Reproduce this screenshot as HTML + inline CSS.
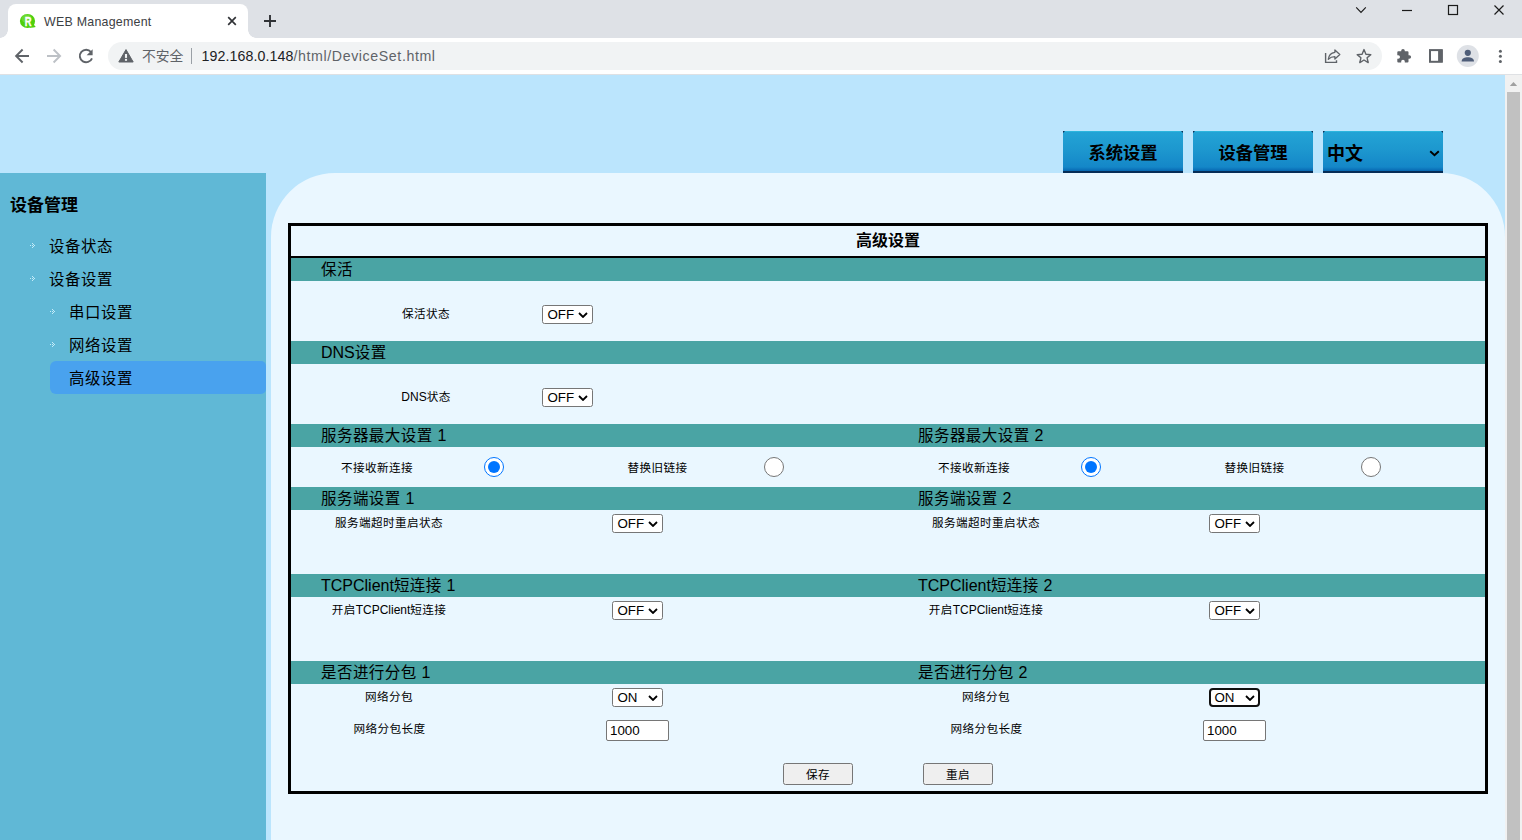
<!DOCTYPE html>
<html lang="zh-CN">
<head>
<meta charset="utf-8">
<title>WEB Management</title>
<style>
*{box-sizing:border-box;margin:0;padding:0}
html,body{width:1522px;height:840px;overflow:hidden;background:#bbe5fd;font-family:"Liberation Sans","Noto Sans CJK SC",sans-serif;color:#000}
.abs{position:absolute}
#root{position:relative;width:1522px;height:840px;overflow:hidden}
/* ---------- browser chrome ---------- */
#tabbar{left:0;top:0;width:1522px;height:38px;background:#dee1e6}
#tab{left:8px;top:4px;width:240px;height:34px;background:#fff;border-radius:8px 8px 0 0}
#tab:before,#tab:after{content:"";position:absolute;bottom:0;width:8px;height:8px;background:radial-gradient(circle at 0 0,transparent 7.5px,#fff 8px)}
#tab:before{left:-8px}
#tab:after{right:-8px;background:radial-gradient(circle at 100% 0,transparent 7.5px,#fff 8px)}
#tabtitle{left:44px;top:14px;letter-spacing:.25px;font-size:12.4px;line-height:16px;color:#3c4043;white-space:nowrap}
#toolbar{left:0;top:38px;width:1522px;height:36px;background:#fff}
#toolline{left:0;top:74px;width:1522px;height:1px;background:#dfe1e4}
#omni{left:108px;top:42px;width:1274px;height:28px;border-radius:14px;background:#f1f3f4}
#insecure{left:142px;top:48px;font-size:13.8px;line-height:18px;color:#5f6368;white-space:nowrap}
#omnisep{left:191px;top:48px;width:1px;height:16px;background:#9aa0a6}
#url{left:201.5px;top:47px;letter-spacing:.1px;font-size:14.2px;line-height:18px;color:#202124;white-space:nowrap}
#url span{color:#5f6368;letter-spacing:.6px}
/* ---------- page ---------- */
#page{left:0;top:74px;width:1505px;height:766px;background:#bbe5fd;overflow:hidden}
#scroll{left:1505px;top:74px;width:17px;height:766px;background:#f1f1f1}
#thumb{left:1507px;top:92px;width:13px;height:748px;background:#c1c1c1}
#side{left:0;top:99px;width:266px;height:667px;background:#60b8d6}
#panel{left:271px;top:99px;width:1234px;height:700px;background:#eaf7ff;border-radius:64px 64px 0 0}
.nav{top:57px;width:120px;height:42px;text-align:center;font-size:17.3px;line-height:44.6px;font-weight:bold;
 background:linear-gradient(#2cb5dd 0,#2cb5dd 1px,#23a3d5 1px,#1d98cf 18px,#1487c8 36px,#0767b1 40px,#062d57 40px,#062d57 42px)}
.nav:before,.nav:after{content:"";position:absolute;top:0;width:0;height:0;border-top:2px solid #0a2f57}
.nav:before{left:0;border-right:2px solid transparent}
.nav:after{right:0;border-left:2px solid transparent}
.sh{margin-top:1px;font-size:17px;font-weight:bold;left:10px;line-height:22px}
.mi{margin-top:1.3px;font-size:15.4px;letter-spacing:.6px;line-height:22px;white-space:nowrap}
.dot{width:5px;height:5px}
#sel{left:50px;top:287px;width:216px;height:33px;border-radius:6px 5px 5px 6px;background:#49a2ee}
/* table */
#tbl{left:288px;top:149px;width:1200px;height:571px;border:3px solid #000}
#thead{left:291px;top:152px;width:1194px;height:32px;border-bottom:2px solid #000;text-align:center;font-weight:bold;font-size:16px;line-height:29px}
.band{left:291px;width:1194px;height:23px;background:#4aa4a4;font-size:15.5px;letter-spacing:.45px;line-height:22px}
.band span{position:absolute;top:1px;white-space:nowrap}
.band i{font-style:normal;font-size:16px;letter-spacing:0;position:relative;top:-.5px}
.lb i{font-style:normal;font-size:12px;letter-spacing:0}
.lb{margin-top:1px;font-size:11.6px;letter-spacing:.4px;line-height:16px;white-space:nowrap;text-align:center;width:160px}
.sl{width:51px;height:19px;border:1px solid #767676;border-radius:2.5px;background:#fff;font-size:13.33px;line-height:17px;padding-left:4.5px}
.sl svg{position:absolute;right:4px;top:5.5px}
.sl.fc svg{right:3px;top:4.5px}
.rd{width:20px;height:20px;border-radius:50%;border:1px solid #767676;background:#fff}
.rd.on{border:1.5px solid #0075ff}
.rd.on:after{content:"";position:absolute;left:2.5px;top:2.5px;width:12px;height:12px;border-radius:50%;background:#0075ff}
.tx{width:63px;height:21px;border:1px solid #767676;border-radius:2px;background:#fff;font-size:13.33px;line-height:19px;padding-left:3px}
.bt{width:70px;height:22px;border:1px solid #767676;border-radius:2.5px;background:#efefef;font-size:11.6px;letter-spacing:.4px;line-height:22px;text-align:center}
</style>
</head>
<body>
<div id="root">
<!-- chrome -->
<div id="tabbar" class="abs"></div>
<div id="tab" class="abs"></div>
<div id="toolbar" class="abs"></div>
<div id="omni" class="abs"></div>
<div id="tabtitle" class="abs">WEB Management</div>
<div id="insecure" class="abs">不安全</div>
<div id="omnisep" class="abs"></div>
<div id="url" class="abs">192.168.0.148<span>/html/DeviceSet.html</span></div>
<svg id="icons" class="abs" style="left:0;top:0" width="1522" height="74" viewBox="0 0 1522 74">
 <!-- favicon -->
 <ellipse cx="27.5" cy="21" rx="7.6" ry="7.1" fill="#4fd00c"/>
 <path d="M29.5 27.6 Q33 27.8 35.8 26.9 Q33.6 25.6 33.6 23 Z" fill="#4fd00c"/>
 <ellipse cx="26.5" cy="18.5" rx="5" ry="4.2" fill="#86e352" opacity=".5"/>
 <text x="28.1" y="25.5" font-family="Liberation Sans, sans-serif" font-size="12.6" font-weight="bold" fill="#fff" stroke="#fff" stroke-width=".35" text-anchor="middle" textLength="6.8" lengthAdjust="spacingAndGlyphs">R</text>
 <!-- tab close / new tab -->
 <path d="M228.2 17.2 L235.8 24.8 M235.8 17.2 L228.2 24.8" stroke="#303236" stroke-width="1.65" fill="none"/>
 <path d="M264 21 H276 M270 15 V27" stroke="#303236" stroke-width="1.9" fill="none"/>
 <!-- window controls -->
 <path d="M1356.2 7.3 L1361 12.3 L1365.8 7.3" stroke="#1b1b1b" stroke-width="1.15" fill="none"/>
 <path d="M1402 10.5 H1412" stroke="#1b1b1b" stroke-width="1.2" fill="none"/>
 <rect x="1448.5" y="5.5" width="9" height="9" stroke="#1b1b1b" stroke-width="1.2" fill="none"/>
 <path d="M1494.5 5.5 L1503.5 14.5 M1503.5 5.5 L1494.5 14.5" stroke="#1b1b1b" stroke-width="1.2" fill="none"/>
 <!-- back / forward / reload -->
 <path d="M29 56 H16.4 M22.6 49.5 L16.1 56 L22.6 62.5" stroke="#5f6368" stroke-width="1.9" fill="none"/>
 <path d="M47 56 H59.8 M53.6 49.5 L60.1 56 L53.6 62.5" stroke="#bdc1c6" stroke-width="1.9" fill="none"/>
 <path d="M91 52 A6.3 6.3 0 1 0 92 58.3" stroke="#5f6368" stroke-width="1.9" fill="none"/>
 <path d="M92.6 49.2 V55.2 H86.6 Z" fill="#5f6368"/>
 <!-- warning -->
 <path d="M126 49.6 L133.2 62 H118.8 Z" fill="#5f6368" stroke="#5f6368" stroke-width="1" stroke-linejoin="round"/>
 <rect x="124.95" y="54" width="2.1" height="3.9" fill="#f1f3f4"/>
 <rect x="124.95" y="58.9" width="2.1" height="1.9" fill="#f1f3f4"/>
 <!-- share -->
 <path d="M1325.6 53 V62.4 H1336.5 V60.3" stroke="#5f6368" stroke-width="1.4" fill="none"/>
 <path d="M1328.3 59.4 C1328.7 55.4 1331.2 52.7 1334.9 52.3 V50 L1339.8 54.5 L1334.9 59 V56.7 C1332 56.7 1330 57.6 1328.3 59.4 Z" stroke="#5f6368" stroke-width="1.3" fill="none" stroke-linejoin="round"/>
 <!-- star -->
 <path d="M1364 49.6 L1365.9 54.2 L1370.8 54.6 L1367.1 57.8 L1368.2 62.6 L1364 60 L1359.8 62.6 L1360.9 57.8 L1357.2 54.6 L1362.1 54.2 Z" stroke="#5f6368" stroke-width="1.4" fill="none" stroke-linejoin="round"/>
 <!-- puzzle -->
 <path d="M1398.3 51.3 H1401.2 V50.7 A1.8 1.8 0 0 1 1404.8 50.7 V51.3 H1407.5 Q1408.5 51.3 1408.5 52.3 V55.2 H1409.3 A1.8 1.8 0 0 1 1409.3 58.8 H1408.5 V61.5 Q1408.5 62.5 1407.5 62.5 H1404.8 V61.6 A1.8 1.8 0 0 0 1401.2 61.6 V62.5 H1398.3 Q1397.3 62.5 1397.3 61.5 V58.8 H1398.2 A1.8 1.8 0 0 0 1398.2 55.2 H1397.3 V52.3 Q1397.3 51.3 1398.3 51.3 Z" fill="#5f6368"/>
 <!-- side panel -->
 <rect x="1430" y="50.1" width="11.8" height="11.7" stroke="#5f6368" stroke-width="2" fill="none"/>
 <rect x="1438.1" y="50" width="4.5" height="12" fill="#5f6368"/>
 <!-- profile -->
 <circle cx="1467.8" cy="56" r="11" fill="#dee1e6"/>
 <circle cx="1467.8" cy="52.8" r="3.1" fill="#4e5d78"/>
 <path d="M1461.6 61.6 C1461.6 58.2 1464.6 57.2 1467.8 57.2 C1471 57.2 1474 58.2 1474 61.6 Z" fill="#4e5d78"/>
 <!-- menu dots -->
 <circle cx="1500.4" cy="51.2" r="1.5" fill="#5f6368"/><circle cx="1500.4" cy="56.3" r="1.5" fill="#5f6368"/><circle cx="1500.4" cy="61.4" r="1.5" fill="#5f6368"/>
 <!-- scrollbar arrow -->
</svg>

<!-- page -->
<div id="page" class="abs">
 <div id="side" class="abs"></div>
 <div id="panel" class="abs"></div>
 <div class="abs nav" style="left:1063px">系统设置</div>
 <div class="abs nav" style="left:1193px">设备管理</div>
 <div class="abs nav" style="left:1323px;text-align:left;padding-left:4px;font-size:18px;line-height:47px">中文<svg class="abs" style="right:3.4px;top:18.6px" width="11" height="7" viewBox="0 0 11 7"><path d="M1.2 1.2 L5.5 5.3 L9.8 1.2" fill="none" stroke="#000" stroke-width="1.9"/></svg></div>
 <div class="abs sh" style="top:120px">设备管理</div>
 <div id="sel" class="abs"></div>
 <div class="abs mi" style="left:49px;top:161px">设备状态</div>
 <div class="abs mi" style="left:49px;top:194px">设备设置</div>
 <div class="abs mi" style="left:69px;top:227px">串口设置</div>
 <div class="abs mi" style="left:69px;top:260px">网络设置</div>
 <div class="abs mi" style="left:69px;top:293px">高级设置</div>
<svg class="abs" style="left:30px;top:169px" width="5" height="5" viewBox="0 0 5 5" shape-rendering="crispEdges" fill="#c4ebf8"><rect x="0" y="2" width="1" height="1"/><rect x="2" y="0" width="1" height="1"/><rect x="2" y="2" width="1" height="1"/><rect x="2" y="4" width="1" height="1"/><rect x="3" y="1" width="1" height="1"/><rect x="3" y="3" width="1" height="1"/><rect x="4" y="2" width="1" height="1"/></svg>
<svg class="abs" style="left:30px;top:202px" width="5" height="5" viewBox="0 0 5 5" shape-rendering="crispEdges" fill="#c4ebf8"><rect x="0" y="2" width="1" height="1"/><rect x="2" y="0" width="1" height="1"/><rect x="2" y="2" width="1" height="1"/><rect x="2" y="4" width="1" height="1"/><rect x="3" y="1" width="1" height="1"/><rect x="3" y="3" width="1" height="1"/><rect x="4" y="2" width="1" height="1"/></svg>
<svg class="abs" style="left:50px;top:235px" width="5" height="5" viewBox="0 0 5 5" shape-rendering="crispEdges" fill="#c4ebf8"><rect x="0" y="2" width="1" height="1"/><rect x="2" y="0" width="1" height="1"/><rect x="2" y="2" width="1" height="1"/><rect x="2" y="4" width="1" height="1"/><rect x="3" y="1" width="1" height="1"/><rect x="3" y="3" width="1" height="1"/><rect x="4" y="2" width="1" height="1"/></svg>
<svg class="abs" style="left:50px;top:268px" width="5" height="5" viewBox="0 0 5 5" shape-rendering="crispEdges" fill="#c4ebf8"><rect x="0" y="2" width="1" height="1"/><rect x="2" y="0" width="1" height="1"/><rect x="2" y="2" width="1" height="1"/><rect x="2" y="4" width="1" height="1"/><rect x="3" y="1" width="1" height="1"/><rect x="3" y="3" width="1" height="1"/><rect x="4" y="2" width="1" height="1"/></svg>
 <div id="tbl" class="abs"></div>
 <div id="thead" class="abs">高级设置</div>
<div class="abs band" style="top:184px"><span style="left:30px">保活</span></div>
<div class="abs lb" style="left:346.0px;top:231px;width:160px">保活状态</div>
<div class="abs sl" style="left:542px;top:231px">OFF<svg width="10" height="6" viewBox="0 0 10 6"><path d="M1 1 L5 5 L9 1" fill="none" stroke="#000" stroke-width="1.8"/></svg></div>
<div class="abs band" style="top:267px"><span style="left:30px"><i>DNS</i>设置</span></div>
<div class="abs lb" style="left:346.0px;top:314px;width:160px"><i>DNS</i>状态</div>
<div class="abs sl" style="left:542px;top:314px">OFF<svg width="10" height="6" viewBox="0 0 10 6"><path d="M1 1 L5 5 L9 1" fill="none" stroke="#000" stroke-width="1.8"/></svg></div>
<div class="abs band" style="top:350px"><span style="left:30px">服务器最大设置 <i>1</i></span><span style="left:627px">服务器最大设置 <i>2</i></span></div>
<div class="abs lb" style="left:297.0px;top:385px;width:160px">不接收新连接</div>
<div class="abs rd on" style="left:484px;top:383px"></div>
<div class="abs lb" style="left:577.5px;top:385px;width:160px">替换旧链接</div>
<div class="abs rd" style="left:764px;top:383px"></div>
<div class="abs lb" style="left:894.0px;top:385px;width:160px">不接收新连接</div>
<div class="abs rd on" style="left:1081px;top:383px"></div>
<div class="abs lb" style="left:1174.5px;top:385px;width:160px">替换旧链接</div>
<div class="abs rd" style="left:1361px;top:383px"></div>
<div class="abs band" style="top:413px"><span style="left:30px">服务端设置 <i>1</i></span><span style="left:627px">服务端设置 <i>2</i></span></div>
<div class="abs lb" style="left:309.0px;top:440px;width:160px">服务端超时重启状态</div>
<div class="abs sl" style="left:612px;top:440px">OFF<svg width="10" height="6" viewBox="0 0 10 6"><path d="M1 1 L5 5 L9 1" fill="none" stroke="#000" stroke-width="1.8"/></svg></div>
<div class="abs lb" style="left:906.0px;top:440px;width:160px">服务端超时重启状态</div>
<div class="abs sl" style="left:1209px;top:440px">OFF<svg width="10" height="6" viewBox="0 0 10 6"><path d="M1 1 L5 5 L9 1" fill="none" stroke="#000" stroke-width="1.8"/></svg></div>
<div class="abs band" style="top:500px"><span style="left:30px"><i>TCPClient</i>短连接 <i>1</i></span><span style="left:627px"><i>TCPClient</i>短连接 <i>2</i></span></div>
<div class="abs lb" style="left:309.0px;top:527px;width:160px">开启<i>TCPClient</i>短连接</div>
<div class="abs sl" style="left:612px;top:527px">OFF<svg width="10" height="6" viewBox="0 0 10 6"><path d="M1 1 L5 5 L9 1" fill="none" stroke="#000" stroke-width="1.8"/></svg></div>
<div class="abs lb" style="left:906.0px;top:527px;width:160px">开启<i>TCPClient</i>短连接</div>
<div class="abs sl" style="left:1209px;top:527px">OFF<svg width="10" height="6" viewBox="0 0 10 6"><path d="M1 1 L5 5 L9 1" fill="none" stroke="#000" stroke-width="1.8"/></svg></div>
<div class="abs band" style="top:587px"><span style="left:30px">是否进行分包 <i>1</i></span><span style="left:627px">是否进行分包 <i>2</i></span></div>
<div class="abs lb" style="left:309.0px;top:614px;width:160px">网络分包</div>
<div class="abs sl" style="left:612px;top:614px">ON<svg width="10" height="6" viewBox="0 0 10 6"><path d="M1 1 L5 5 L9 1" fill="none" stroke="#000" stroke-width="1.8"/></svg></div>
<div class="abs lb" style="left:309.5px;top:646px;width:160px">网络分包长度</div>
<div class="abs tx" style="left:606px;top:646px">1000</div>
<div class="abs lb" style="left:906.0px;top:614px;width:160px">网络分包</div>
<div class="abs sl fc" style="left:1209px;top:614px;border:2px solid #101010;border-radius:4px;line-height:15px;padding-left:3.5px">ON<svg width="10" height="6" viewBox="0 0 10 6"><path d="M1 1 L5 5 L9 1" fill="none" stroke="#000" stroke-width="1.8"/></svg></div>
<div class="abs lb" style="left:906.5px;top:646px;width:160px">网络分包长度</div>
<div class="abs tx" style="left:1203px;top:646px">1000</div>
<div class="abs bt" style="left:783px;top:689px">保存</div>
<div class="abs bt" style="left:923px;top:689px">重启</div>
</div>
<div id="scroll" class="abs"></div>
<div id="toolline" class="abs"></div>
<div id="thumb" class="abs"></div>
<svg class="abs" style="left:1505px;top:74px" width="17" height="17" viewBox="0 0 17 17"><path d="M4.8 12 L8.5 8 L12.2 12 Z" fill="#a0a0a0"/></svg>
</div>
</body>
</html>
